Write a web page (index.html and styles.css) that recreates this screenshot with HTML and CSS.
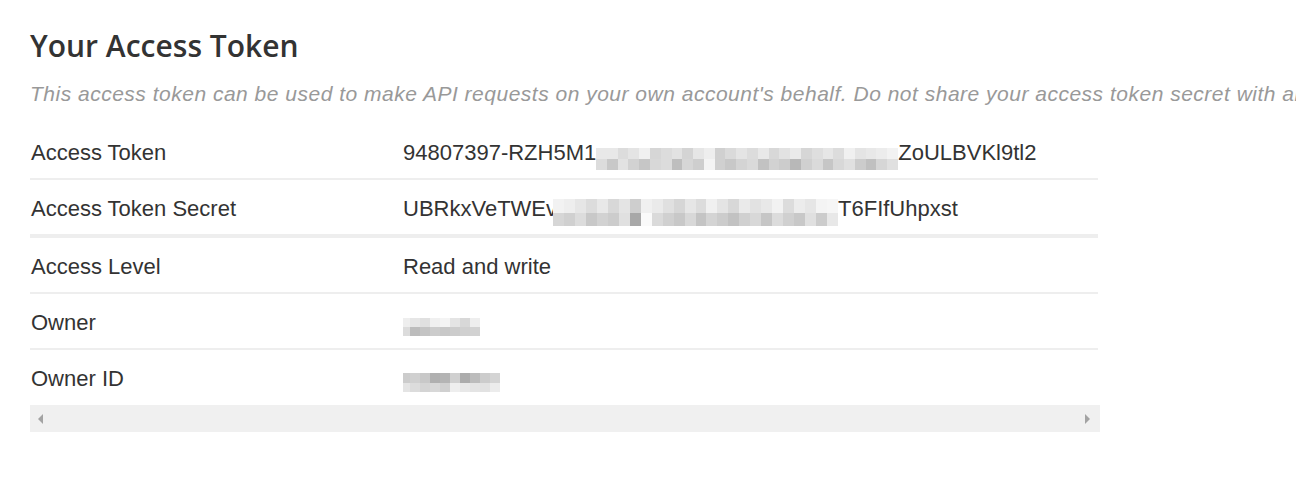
FILE: index.html
```html
<!DOCTYPE html>
<html lang="en">
<head>
<meta charset="utf-8">
<title>Your Access Token</title>
<link rel="stylesheet" href="styles.css">
</head>
<body>
<div class="page">
  <h1 class="title">Your Access Token</h1>
  <p class="desc">This access token can be used to make API requests on your own account's behalf. Do not share your access token secret with anyone.</p>
  <div class="table-wrap">
    <table class="kv">
      <colgroup><col class="col-k"><col class="col-v"></colgroup>
      <tbody>
        <tr>
          <td class="k">Access Token</td>
          <td class="v">94807397-RZH5M1<svg class="blur b1" viewBox="0 0 28 2" preserveAspectRatio="none" shape-rendering="crispEdges">
            <rect x="0" y="0" width="1" height="1" fill="#e8e8e8"/><rect x="1" y="0" width="1" height="1" fill="#e8e8e8"/><rect x="2" y="0" width="1" height="1" fill="#dcdcdc"/><rect x="3" y="0" width="1" height="1" fill="#e4e4e4"/><rect x="4" y="0" width="1" height="1" fill="#f0f0f0"/><rect x="5" y="0" width="1" height="1" fill="#d6d6d6"/><rect x="6" y="0" width="1" height="1" fill="#dcdcdc"/><rect x="7" y="0" width="1" height="1" fill="#e2e2e2"/><rect x="8" y="0" width="1" height="1" fill="#d4d4d4"/><rect x="9" y="0" width="1" height="1" fill="#e6e6e6"/><rect x="10" y="0" width="1" height="1" fill="#eeeeee"/><rect x="11" y="0" width="1" height="1" fill="#d0d0d0"/><rect x="12" y="0" width="1" height="1" fill="#dadada"/><rect x="13" y="0" width="1" height="1" fill="#e4e4e4"/><rect x="14" y="0" width="1" height="1" fill="#dcdcdc"/><rect x="15" y="0" width="1" height="1" fill="#e8e8e8"/><rect x="16" y="0" width="1" height="1" fill="#d8d8d8"/><rect x="17" y="0" width="1" height="1" fill="#e2e2e2"/><rect x="18" y="0" width="1" height="1" fill="#eaeaea"/><rect x="19" y="0" width="1" height="1" fill="#d6d6d6"/><rect x="20" y="0" width="1" height="1" fill="#dedede"/><rect x="21" y="0" width="1" height="1" fill="#e6e6e6"/><rect x="22" y="0" width="1" height="1" fill="#dcdcdc"/><rect x="23" y="0" width="1" height="1" fill="#f0f0f0"/><rect x="24" y="0" width="1" height="1" fill="#e4e4e4"/><rect x="25" y="0" width="1" height="1" fill="#e8e8e8"/><rect x="26" y="0" width="1" height="1" fill="#ececec"/><rect x="27" y="0" width="1" height="1" fill="#f2f2f2"/>
            <rect x="0" y="1" width="1" height="1" fill="#dcdcdc"/><rect x="1" y="1" width="1" height="1" fill="#c8c8c8"/><rect x="2" y="1" width="1" height="1" fill="#e2e2e2"/><rect x="3" y="1" width="1" height="1" fill="#d2d2d2"/><rect x="4" y="1" width="1" height="1" fill="#c6c6c6"/><rect x="5" y="1" width="1" height="1" fill="#d8d8d8"/><rect x="6" y="1" width="1" height="1" fill="#dcdcdc"/><rect x="7" y="1" width="1" height="1" fill="#bebebe"/><rect x="8" y="1" width="1" height="1" fill="#d6d6d6"/><rect x="9" y="1" width="1" height="1" fill="#cecece"/><rect x="10" y="1" width="1" height="1" fill="#f4f4f4"/><rect x="11" y="1" width="1" height="1" fill="#d0d0d0"/><rect x="12" y="1" width="1" height="1" fill="#c8c8c8"/><rect x="13" y="1" width="1" height="1" fill="#d4d4d4"/><rect x="14" y="1" width="1" height="1" fill="#dadada"/><rect x="15" y="1" width="1" height="1" fill="#c2c2c2"/><rect x="16" y="1" width="1" height="1" fill="#d2d2d2"/><rect x="17" y="1" width="1" height="1" fill="#cccccc"/><rect x="18" y="1" width="1" height="1" fill="#b8b8b8"/><rect x="19" y="1" width="1" height="1" fill="#d0d0d0"/><rect x="20" y="1" width="1" height="1" fill="#dadada"/><rect x="21" y="1" width="1" height="1" fill="#c6c6c6"/><rect x="22" y="1" width="1" height="1" fill="#d8d8d8"/><rect x="23" y="1" width="1" height="1" fill="#e0e0e0"/><rect x="24" y="1" width="1" height="1" fill="#cccccc"/><rect x="25" y="1" width="1" height="1" fill="#c0c0c0"/><rect x="26" y="1" width="1" height="1" fill="#d6d6d6"/><rect x="27" y="1" width="1" height="1" fill="#e0e0e0"/>
          </svg>ZoULBVKl9tl2</td>
        </tr>
        <tr>
          <td class="k">Access Token Secret</td>
          <td class="v">UBRkxVeTWEv<svg class="blur b2" viewBox="0 0 26 2" preserveAspectRatio="none" shape-rendering="crispEdges">
            <rect x="0" y="0" width="1" height="1" fill="#f2f2f2"/><rect x="1" y="0" width="1" height="1" fill="#eeeeee"/><rect x="2" y="0" width="1" height="1" fill="#e6e6e6"/><rect x="3" y="0" width="1" height="1" fill="#dcdcdc"/><rect x="4" y="0" width="1" height="1" fill="#e8e8e8"/><rect x="5" y="0" width="1" height="1" fill="#d8d8d8"/><rect x="6" y="0" width="1" height="1" fill="#e4e4e4"/><rect x="7" y="0" width="1" height="1" fill="#cecece"/><rect x="8" y="0" width="1" height="1" fill="#f0f0f0"/><rect x="9" y="0" width="1" height="1" fill="#eaeaea"/><rect x="10" y="0" width="1" height="1" fill="#e0e0e0"/><rect x="11" y="0" width="1" height="1" fill="#d6d6d6"/><rect x="12" y="0" width="1" height="1" fill="#e6e6e6"/><rect x="13" y="0" width="1" height="1" fill="#dcdcdc"/><rect x="14" y="0" width="1" height="1" fill="#f0f0f0"/><rect x="15" y="0" width="1" height="1" fill="#e4e4e4"/><rect x="16" y="0" width="1" height="1" fill="#d8d8d8"/><rect x="17" y="0" width="1" height="1" fill="#eaeaea"/><rect x="18" y="0" width="1" height="1" fill="#e2e2e2"/><rect x="19" y="0" width="1" height="1" fill="#e8e8e8"/><rect x="20" y="0" width="1" height="1" fill="#f2f2f2"/><rect x="21" y="0" width="1" height="1" fill="#dcdcdc"/><rect x="22" y="0" width="1" height="1" fill="#ececec"/><rect x="23" y="0" width="1" height="1" fill="#e6e6e6"/><rect x="24" y="0" width="1" height="1" fill="#f4f4f4"/><rect x="25" y="0" width="1" height="1" fill="#f6f6f6"/>
            <rect x="0" y="1" width="1" height="1" fill="#d6d6d6"/><rect x="1" y="1" width="1" height="1" fill="#d0d0d0"/><rect x="2" y="1" width="1" height="1" fill="#dcdcdc"/><rect x="3" y="1" width="1" height="1" fill="#c8c8c8"/><rect x="4" y="1" width="1" height="1" fill="#d2d2d2"/><rect x="5" y="1" width="1" height="1" fill="#cccccc"/><rect x="6" y="1" width="1" height="1" fill="#e0e0e0"/><rect x="7" y="1" width="1" height="1" fill="#a8a8a8"/><rect x="8" y="1" width="1" height="1" fill="#fafafa"/><rect x="9" y="1" width="1" height="1" fill="#dadada"/><rect x="10" y="1" width="1" height="1" fill="#d0d0d0"/><rect x="11" y="1" width="1" height="1" fill="#c8c8c8"/><rect x="12" y="1" width="1" height="1" fill="#d8d8d8"/><rect x="13" y="1" width="1" height="1" fill="#c4c4c4"/><rect x="14" y="1" width="1" height="1" fill="#d4d4d4"/><rect x="15" y="1" width="1" height="1" fill="#cccccc"/><rect x="16" y="1" width="1" height="1" fill="#c2c2c2"/><rect x="17" y="1" width="1" height="1" fill="#d0d0d0"/><rect x="18" y="1" width="1" height="1" fill="#d8d8d8"/><rect x="19" y="1" width="1" height="1" fill="#c6c6c6"/><rect x="20" y="1" width="1" height="1" fill="#dcdcdc"/><rect x="21" y="1" width="1" height="1" fill="#d0d0d0"/><rect x="22" y="1" width="1" height="1" fill="#c8c8c8"/><rect x="23" y="1" width="1" height="1" fill="#e0e0e0"/><rect x="24" y="1" width="1" height="1" fill="#cccccc"/><rect x="25" y="1" width="1" height="1" fill="#e8e8e8"/>
          </svg>T6FIfUhpxst</td>
        </tr>
      </tbody>
      <tbody>
        <tr class="group-start">
          <td class="k">Access Level</td>
          <td class="v">Read and write</td>
        </tr>
        <tr>
          <td class="k">Owner</td>
          <td class="v"><svg class="blur b3" viewBox="0 0 8 2" preserveAspectRatio="none" shape-rendering="crispEdges">
            <rect x="0" y="0" width="1" height="1" fill="#eeeeee"/><rect x="1" y="0" width="1" height="1" fill="#e6e6e6"/><rect x="2" y="0" width="1" height="1" fill="#e0e0e0"/><rect x="3" y="0" width="1" height="1" fill="#f0f0f0"/><rect x="4" y="0" width="1" height="1" fill="#f4f4f4"/><rect x="5" y="0" width="1" height="1" fill="#e4e4e4"/><rect x="6" y="0" width="1" height="1" fill="#d8d8d8"/><rect x="7" y="0" width="1" height="1" fill="#eeeeee"/>
            <rect x="0" y="1" width="1" height="1" fill="#dcdcdc"/><rect x="1" y="1" width="1" height="1" fill="#bcbcbc"/><rect x="2" y="1" width="1" height="1" fill="#c4c4c4"/><rect x="3" y="1" width="1" height="1" fill="#cccccc"/><rect x="4" y="1" width="1" height="1" fill="#c8c8c8"/><rect x="5" y="1" width="1" height="1" fill="#cccccc"/><rect x="6" y="1" width="1" height="1" fill="#d0d0d0"/><rect x="7" y="1" width="1" height="1" fill="#d2d2d2"/>
          </svg></td>
        </tr>
        <tr>
          <td class="k">Owner ID</td>
          <td class="v"><svg class="blur b4" viewBox="0 0 10 2" preserveAspectRatio="none" shape-rendering="crispEdges">
            <rect x="0" y="0" width="1" height="1" fill="#cccccc"/><rect x="1" y="0" width="1" height="1" fill="#d0d0d0"/><rect x="2" y="0" width="1" height="1" fill="#c8c8c8"/><rect x="3" y="0" width="1" height="1" fill="#b0b0b0"/><rect x="4" y="0" width="1" height="1" fill="#b4b4b4"/><rect x="5" y="0" width="1" height="1" fill="#d0d0d0"/><rect x="6" y="0" width="1" height="1" fill="#acacac"/><rect x="7" y="0" width="1" height="1" fill="#bcbcbc"/><rect x="8" y="0" width="1" height="1" fill="#cccccc"/><rect x="9" y="0" width="1" height="1" fill="#d4d4d4"/>
            <rect x="0" y="1" width="1" height="1" fill="#e4e4e4"/><rect x="1" y="1" width="1" height="1" fill="#dcdcdc"/><rect x="2" y="1" width="1" height="1" fill="#d4d4d4"/><rect x="3" y="1" width="1" height="1" fill="#d8d8d8"/><rect x="4" y="1" width="1" height="1" fill="#d0d0d0"/><rect x="5" y="1" width="1" height="1" fill="#eeeeee"/><rect x="6" y="1" width="1" height="1" fill="#e8e8e8"/><rect x="7" y="1" width="1" height="1" fill="#e4e4e4"/><rect x="8" y="1" width="1" height="1" fill="#e2e2e2"/><rect x="9" y="1" width="1" height="1" fill="#ececec"/>
          </svg></td>
        </tr>
      </tbody>
    </table>
    <div class="hscroll">
      <span class="arrow arrow-left"></span>
      <span class="arrow arrow-right"></span>
    </div>
  </div>
</div>
</body>
</html>
```

FILE: styles.css
```css
html, body {
  margin: 0;
  padding: 0;
  background: #ffffff;
}

body {
  font-family: "Liberation Sans", Arial, sans-serif;
  color: #333333;
  overflow: hidden;
}

.page {
  padding: 26px 0 0 30px;
}

.title {
  margin: 0;
  font-family: "Open Sans", "Liberation Sans", sans-serif;
  font-weight: 600;
  font-size: 30px;
  line-height: 40px;
  color: #333333;
}

.desc {
  margin: 14px 0 16px 0;
  font-style: italic;
  font-size: 21px;
  line-height: 28px;
  color: #999999;
  white-space: nowrap;
  letter-spacing: 0.5px;
}

.table-wrap {
  width: 1070px;
}

.kv {
  width: 1068px;
  border-collapse: separate;
  border-spacing: 0;
  table-layout: fixed;
}

.col-k {
  width: 373px;
}

.kv td {
  padding: 16px 0 12px 0;
  font-size: 22px;
  line-height: 26px;
  color: #333333;
  border-bottom: 2px solid #eeeeee;
  white-space: nowrap;
  overflow: hidden;
  vertical-align: top;
}

.kv td.k {
  padding-left: 1px;
}

.kv tr.group-start td {
  border-top: 2px solid #eeeeee;
}

.kv tbody:last-child tr:last-child td {
  border-bottom: 0;
  padding-bottom: 13px;
}

.blur {
  display: inline-block;
  margin-top: -8px;
  margin-bottom: -8px;
}

.b1 {
  width: 302px;
  height: 22px;
  vertical-align: -2px;
}

.b2 {
  width: 285px;
  height: 27px;
  vertical-align: -2px;
  margin-left: -4px;
}

.b3 {
  width: 80px;
  height: 18px;
  vertical-align: 2px;
  margin-left: -3px;
}

.b4 {
  width: 100px;
  height: 19px;
  vertical-align: 2px;
  margin-left: -3px;
}

.hscroll {
  height: 27px;
  background: #f0f0f0;
  display: flex;
  align-items: center;
  justify-content: space-between;
  padding: 0 10px 0 8px;
}

.arrow {
  width: 0;
  height: 0;
  border-top: 5px solid transparent;
  border-bottom: 5px solid transparent;
}

.arrow-left {
  border-right: 5px solid #a3a3a3;
}

.arrow-right {
  border-left: 5px solid #a3a3a3;
}
```
